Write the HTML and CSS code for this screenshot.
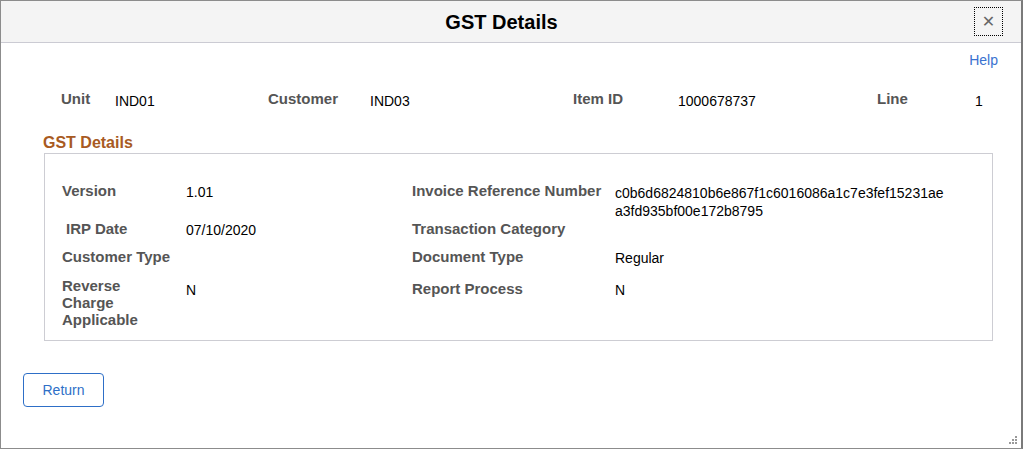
FILE: index.html
```html
<!DOCTYPE html>
<html lang="en">
<head>
  <meta charset="UTF-8">
  <meta name="viewport" content="width=device-width, initial-scale=1.0">
  <title>GST Details</title>
  <link rel="stylesheet" href="styles.css">
</head>
<body>

  <div class="dialog">
    <header class="dialog-header">
      <h1>GST Details</h1>
      <button class="close-btn" title="Close">&#x2715;</button>
    </header>

    <div class="help-row">
      <a href="#" class="help-link">Help</a>
    </div>

    <!-- key fields for the invoice line -->
    <div class="key-row">
      <span class="label">Unit</span>
      <span class="value">IND01</span>
      <span class="label">Customer</span>
      <span class="value">IND03</span>
      <span class="label">Item ID</span>
      <span class="value">1000678737</span>
      <span class="label">Line</span>
      <span class="value">1</span>
    </div>

    <h2 class="section-title">GST Details</h2>
    <div class="group-box">
      <div class="detail-grid">
        <span class="label row1">Version</span>
        <span class="value row1">1.01</span>
        <span class="label row1">Invoice Reference Number</span>
        <span class="value row1 irn">c0b6d6824810b6e867f1c6016086a1c7e3fef15231aea3fd935bf00e172b8795</span>

        <span class="label row2 indent">IRP Date</span>
        <span class="value row2">07/10/2020</span>
        <span class="label row2">Transaction Category</span>
        <span class="value row2"></span>

        <span class="label row3">Customer Type</span>
        <span class="value row3"></span>
        <span class="label row3">Document Type</span>
        <span class="value row3">Regular</span>

        <span class="label multi">Reverse<br>Charge<br>Applicable</span>
        <span class="value row4">N</span>
        <span class="label row4">Report Process</span>
        <span class="value row4">N</span>
      </div>
    </div>

    <div class="actions">
      <button class="return-btn">Return</button>
    </div>

    <svg class="grip" width="10" height="10" viewBox="0 0 10 10">
      <rect x="7" y="1" width="2" height="2" fill="#999"/>
      <rect x="4" y="4" width="2" height="2" fill="#999"/>
      <rect x="7" y="4" width="2" height="2" fill="#999"/>
      <rect x="1" y="7" width="2" height="2" fill="#999"/>
      <rect x="4" y="7" width="2" height="2" fill="#999"/>
      <rect x="7" y="7" width="2" height="2" fill="#999"/>
    </svg>
  </div>

</body>
</html>
```

FILE: styles.css
```css
body {
  margin: 0;
  font-family: 'Liberation Sans', Arial, sans-serif;
  font-size: 14px;
  color: #000;
  background-color: #fff;
}

.dialog {
  position: relative;
  height: 449px;
  box-sizing: border-box;
  border: 1px solid #8c8c8c;
  border-right: 2px solid #7a7a7a;
  background-color: #fff;
}

.dialog-header {
  display: flex;
  align-items: center;
  height: 41px;
  padding-left: 28px;
  padding-right: 18px;
  background-color: #f4f4f4;
  border-bottom: 1px solid #cbcbd3;
}

.dialog-header h1 {
  flex: 1;
  margin: 0;
  text-align: center;
  font-size: 20px;
  font-weight: bold;
  line-height: 24px;
}

.close-btn {
  width: 29px;
  height: 29px;
  padding: 0;
  border: 1px dotted #000;
  background: transparent;
  color: #666;
  font-family: 'DejaVu Sans', sans-serif;
  font-size: 16px;
  font-weight: bold;
  line-height: 27px;
  cursor: pointer;
}

.help-row {
  display: flex;
  justify-content: flex-end;
  padding: 9px 23px 0 0;
  line-height: 16px;
}

.help-link {
  color: #3a72d0;
  text-decoration: none;
}

.label {
  font-size: 15px;
  font-weight: bold;
  color: #555;
}

.key-row {
  display: grid;
  grid-template-columns: 54px 153px 102px 203px 105px 199px 98px auto;
  margin-top: 23px;
  padding-left: 60px;
  line-height: 16px;
}

.key-row .value {
  padding-top: 2px;
}

.section-title {
  margin: 25px 0 0 42px;
  font-size: 16px;
  line-height: 18px;
  font-weight: bold;
  color: #a85a22;
}

.group-box {
  height: 188px;
  box-sizing: border-box;
  margin: 1px 28px 0 43px;
  padding: 29px 0 0 17px;
  border: 1px solid #cdcdd3;
}

.detail-grid {
  display: grid;
  grid-template-columns: 124px 226px 203px 334px;
  grid-template-rows: 38px 28px 28px auto;
  line-height: 16px;
}

.detail-grid .value {
  line-height: 18px;
}

.irn {
  padding-top: 1px;
  word-break: break-all;
}

.indent {
  padding-left: 4px;
}

.multi {
  line-height: 17px;
}

.row4 {
  padding-top: 4px;
}

.actions {
  padding: 32px 0 0 22px;
}

.return-btn {
  width: 81px;
  height: 34px;
  border: 1px solid #2e6fc7;
  border-radius: 4px;
  background-color: #fff;
  color: #2e6fc7;
  font-family: 'Liberation Sans', Arial, sans-serif;
  font-size: 14px;
  cursor: pointer;
}

.grip {
  position: absolute;
  right: 3px;
  bottom: 3px;
}
```
